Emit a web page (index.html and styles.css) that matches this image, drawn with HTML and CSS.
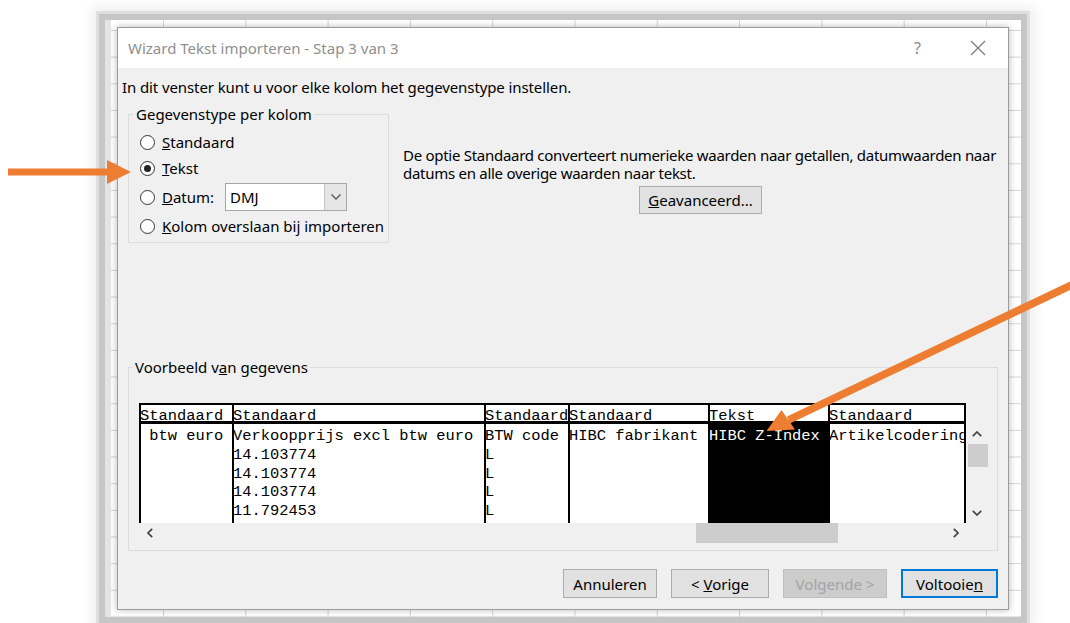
FILE: index.html
```html
<!DOCTYPE html>
<html lang="nl">
<head>
<meta charset="utf-8">
<title>Wizard Tekst importeren</title>
<link rel="stylesheet" href="styles.css">
</head>
<body>
<div class="screen">
  <div class="sheet">
    <div class="dialog">
      <div class="titlebar">
        <span class="title">Wizard Tekst importeren - Stap 3 van 3</span>
        <span class="help">?</span>
        <svg class="close" width="16" height="16" viewBox="0 0 16 16"><path d="M1 1L15 15M15 1L1 15"/></svg>
      </div>
      <div class="content">
        <p class="intro">In dit venster kunt u voor elke kolom het gegevenstype instellen.</p>
        <div class="top">
          <fieldset class="group types">
            <legend>Gegevenstype per kolom</legend>
            <div class="opt"><span class="radio"></span><span><u>S</u>tandaard</span></div>
            <div class="opt"><span class="radio on"></span><span><u>T</u>ekst</span></div>
            <div class="opt date">
              <span class="radio"></span><span class="opt-label"><u>D</u>atum:</span>
              <div class="combo">
                <span class="combo-value">DMJ</span>
                <span class="combo-btn"><svg width="10" height="6" viewBox="0 0 10 6"><path d="M0.5 0.5L5 5L9.5 0.5"/></svg></span>
              </div>
            </div>
            <div class="opt"><span class="radio"></span><span><u>K</u>olom overslaan bij importeren</span></div>
          </fieldset>
          <div class="info">
            <p class="info-text">De optie Standaard converteert numerieke waarden naar getallen, datumwaarden naar<br>datums en alle overige waarden naar tekst.</p>
            <button class="btn adv"><u>G</u>eavanceerd...</button>
          </div>
        </div>
        <fieldset class="group sample">
          <legend>Voorbeeld v<u>a</u>n gegevens</legend>
          <div class="preview">
            <div class="table">
              <div class="col w1"><div class="hd">Standaard</div><div class="cells"> btw euro</div></div>
              <div class="col w2"><div class="hd">Standaard</div><div class="cells">Verkoopprijs excl btw euro
14.103774
14.103774
14.103774
11.792453</div></div>
              <div class="col w3"><div class="hd">Standaard</div><div class="cells">BTW code
L
L
L
L</div></div>
              <div class="col w4"><div class="hd">Standaard</div><div class="cells">HIBC fabrikant</div></div>
              <div class="col w5 sel"><div class="hd">Tekst</div><div class="cells">HIBC Z-Index</div></div>
              <div class="col w6"><div class="hd">Standaard</div><div class="cells">Artikelcodering</div></div>
            </div>
            <div class="vscroll">
              <span class="sbtn"><svg width="10" height="6" viewBox="0 0 10 6"><path d="M0.8 5.2L5 1L9.2 5.2"/></svg></span>
              <span class="vthumb"></span>
              <span class="sbtn down"><svg width="10" height="6" viewBox="0 0 10 6"><path d="M0.8 0.8L5 5L9.2 0.8"/></svg></span>
            </div>
            <div class="hscroll">
              <span class="sbtn"><svg width="6" height="10" viewBox="0 0 6 10"><path d="M5.2 0.8L1 5L5.2 9.2"/></svg></span>
              <span class="htrack"><span class="hthumb"></span></span>
              <span class="sbtn"><svg width="6" height="10" viewBox="0 0 6 10"><path d="M0.8 0.8L5 5L0.8 9.2"/></svg></span>
            </div>
          </div>
        </fieldset>
        <div class="actions">
          <button class="btn cancel">Annuleren</button>
          <button class="btn back">&lt; <u>V</u>orige</button>
          <button class="btn next" disabled>Volgende &gt;</button>
          <button class="btn finish">Voltooie<u>n</u></button>
        </div>
      </div>
    </div>
  </div>
</div>
<svg class="marks" width="1070" height="623" viewBox="0 0 1070 623">
  <rect x="8" y="168.5" width="101" height="7"/>
  <polygon points="107,160 131,172 107,184"/>
  <polygon points="1072,280.5 1075,287.5 790,423.5 787,416.5"/>
  <polygon points="766.5,431 781.5,410 795,429.5"/>
</svg>
</body>
</html>
```
FILE: styles.css
```css
* { box-sizing: border-box; }

html, body { margin: 0; }

body {
  width: 1070px;
  height: 623px;
  overflow: hidden;
  position: relative;
  background: #fff;
  font-family: "Noto Sans", "Open Sans", sans-serif;
  font-size: 15px;
  color: #000;
}

/* framed spreadsheet window with soft edge */
.screen {
  margin: 14px 0 0 99px;
  width: 928px;
  height: 609px;
  border: 6px solid #c6c6c6;
  box-shadow: 0 0 0 3px #dfdfdf, 0 0 12px 7px rgba(0, 0, 0, 0.07);
}

.sheet {
  height: 100%;
  padding: 7px 0 0 12px;
  background-color: #fff;
  background-image:
    linear-gradient(to right, #d4d4d4 1px, transparent 1px),
    linear-gradient(to bottom, #d4d4d4 1px, transparent 1px);
  background-size: 82.3px 100%, 100% 26.67px;
  background-position: 58px 0, 0 10px;
  box-shadow: inset 6px 0 0 #e4e4e4;
}

.dialog {
  width: 892px;
  height: 583px;
  background: #f0f0f0;
  border: 1px solid #9c9c9c;
  box-shadow: 0 0 7px rgba(0, 0, 0, 0.28);
  display: flex;
  flex-direction: column;
}

.titlebar {
  height: 40px;
  flex: none;
  background: #fff;
  display: flex;
  align-items: center;
  padding-left: 10px;
}

.title {
  font-size: 15px;
  color: #8f8f8f;
}

.help {
  margin-left: auto;
  margin-right: 49px;
  font-size: 16px;
  color: #8a8a8a;
}

.close {
  margin-right: 22px;
  fill: none;
  stroke: #7a7a7a;
  stroke-width: 1.2;
}

.content {
  flex: 1;
  padding: 9px 10px 0 10px;
  display: flex;
  flex-direction: column;
}

.intro {
  margin: 0 0 0 -6px;
  line-height: 20px;
  letter-spacing: -0.1px;
}

.top {
  margin-top: 7px;
  display: flex;
  gap: 14px;
}

.group {
  margin: 0;
  border: 1px solid #dcdcdc;
  min-width: 0;
}

.group legend {
  padding: 0 2px;
  margin-left: -6px;
  line-height: 20px;
}

.types {
  width: 261px;
  height: 139px;
  padding: 5px 0 4px 11px;
}

.opt {
  display: flex;
  align-items: center;
  height: 26px;
  gap: 7px;
}

.opt.date {
  height: 28px;
  margin: 2px 0;
}

.opt-label { width: 56px; }

.radio {
  width: 15px;
  height: 15px;
  border: 1px solid #333;
  border-radius: 50%;
  background: #fff;
  display: flex;
  align-items: center;
  justify-content: center;
  flex: none;
}

.radio.on::after {
  content: "";
  width: 7px;
  height: 7px;
  border-radius: 50%;
  background: #222;
}

.combo {
  width: 122px;
  height: 28px;
  border: 1px solid #a8a8a8;
  background: #fff;
  display: flex;
}

.combo-value {
  flex: 1;
  padding-left: 4px;
  line-height: 26px;
}

.combo-btn {
  width: 22px;
  background: #e6e6e6;
  border-left: 1px solid #c4c4c4;
  display: flex;
  align-items: center;
  justify-content: center;
}

.combo-btn svg {
  fill: none;
  stroke: #555;
  stroke-width: 1.3;
}

.sbtn svg {
  fill: none;
  stroke: #444;
  stroke-width: 1.7;
}

.info {
  flex: 1;
  min-width: 0;
  padding-top: 42px;
  display: flex;
  flex-direction: column;
  align-items: center;
}

.info-text {
  margin: 0;
  align-self: stretch;
  line-height: 18px;
  letter-spacing: -0.28px;
  white-space: nowrap;
}

.btn {
  font: inherit;
  color: #000;
  background: #e1e1e1;
  border: 1px solid #adadad;
  height: 29px;
  padding: 0;
}

.adv {
  margin-top: 4px;
  width: 123px;
  height: 28px;
}

.sample {
  margin-top: 114px;
  height: 194px;
  padding: 26px 10px 7px 10px;
}

.preview {
  display: grid;
  grid-template-columns: 827px 22px;
  grid-template-rows: 120px 20px;
}

.table {
  display: flex;
  overflow: hidden;
  background: #fff;
  font-family: "Liberation Mono", "Courier New", monospace;
  font-size: 15.4px;
}

.col {
  flex: none;
  border-left: 2px solid #000;
  display: flex;
  flex-direction: column;
}

.w1 { width: 93px; }
.w2 { width: 252px; }
.w3 { width: 84px; }
.w4 { width: 140px; }
.w5 { width: 120px; }
.w6 { width: 138px; border-right: 2px solid #000; }

.hd {
  height: 21px;
  margin-left: -1px;
  border-top: 2px solid #000;
  border-bottom: 3px solid #000;
  display: flex;
  align-items: flex-end;
  line-height: 9px;
  white-space: pre;
}

.cells {
  flex: 1;
  margin-left: -1px;
  padding-top: 3px;
  line-height: 18.75px;
  white-space: pre;
  overflow: hidden;
}

.sel .cells {
  background: #000;
  color: #fff;
}

.vscroll {
  display: flex;
  flex-direction: column;
  padding-top: 20px;
}

.sbtn {
  display: flex;
  align-items: center;
  justify-content: center;
  flex: none;
}

.vscroll .sbtn { height: 21px; }
.vscroll .down { margin-top: auto; }

.vthumb {
  height: 23px;
  margin-left: 2px;
  background: #cdcdcd;
}

.hscroll {
  display: flex;
}

.hscroll .sbtn { width: 21px; }

.htrack {
  flex: 1;
  display: flex;
}

.hthumb {
  margin-left: 536px;
  width: 142px;
  background: #cdcdcd;
}

.actions {
  margin-top: 18px;
  display: flex;
  justify-content: flex-end;
  gap: 14px;
}

.cancel { width: 94px; }
.back { width: 98px; }
.next {
  width: 104px;
  background: #cccccc;
  border-color: #bfbfbf;
  color: #a3a3a3;
}
.finish {
  width: 97px;
  border: 2px solid #0078d7;
}

/* orange callout arrows drawn over the window */
.marks {
  position: absolute;
  left: 0;
  top: 0;
  fill: #ed7d31;
  pointer-events: none;
}
```
